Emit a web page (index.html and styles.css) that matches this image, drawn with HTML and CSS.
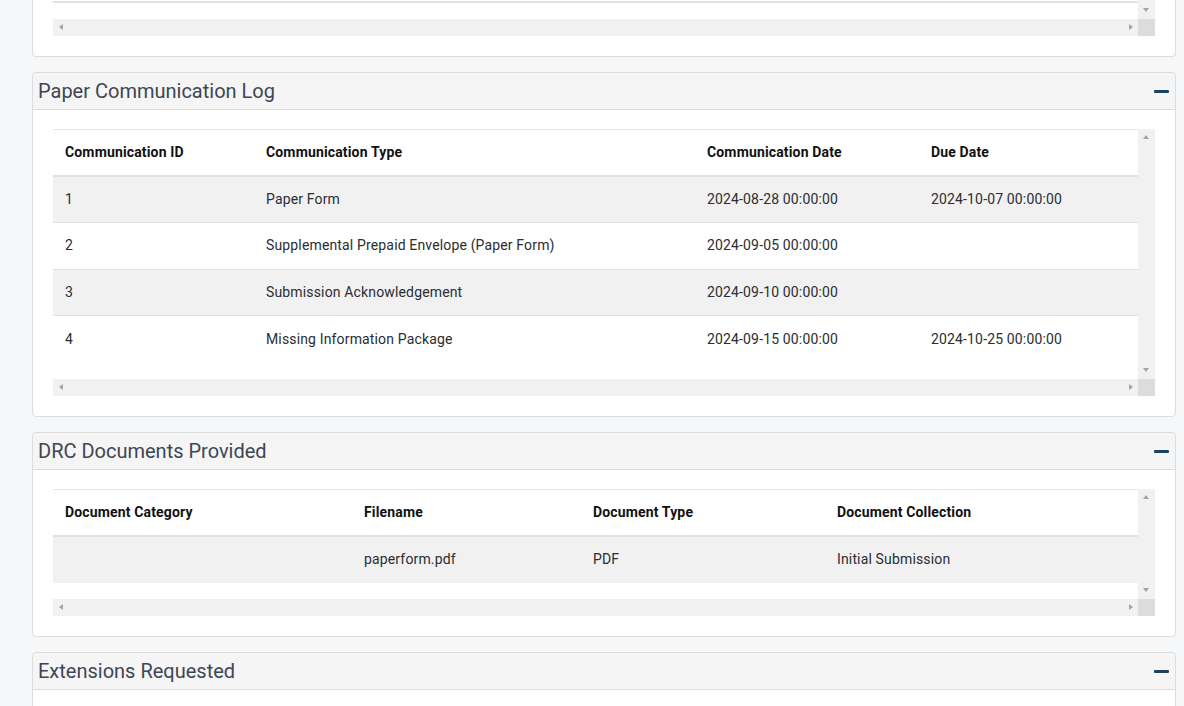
FILE: index.html
```html
<!DOCTYPE html>
<html lang="en">
<head>
<meta charset="utf-8">
<title>Case Detail</title>
<link rel="stylesheet" href="styles.css">
</head>
<body>
<main class="page">

  <section class="panel panel-cut">
    <div class="panel-body">
      <div class="scroller">
        <div class="viewport viewport-cut">
          <div class="cut-line"></div>
        </div>
        <div class="vbar"><span class="arr arr-down"></span></div>
        <div class="hbar"><span class="arr arr-left"></span><span class="arr arr-right"></span></div>
        <div class="corner"></div>
      </div>
    </div>
  </section>

  <section class="panel">
    <header class="panel-head">
      <h2 class="panel-title">Paper Communication Log</h2>
      <span class="collapse-btn"></span>
    </header>
    <div class="panel-body">
      <div class="scroller">
        <div class="viewport viewport-comm">
          <table class="grid">
            <colgroup>
              <col class="w201"><col class="w441"><col class="w224"><col>
            </colgroup>
            <thead>
              <tr><th>Communication ID</th><th>Communication Type</th><th>Communication Date</th><th>Due Date</th></tr>
            </thead>
            <tbody>
              <tr class="odd"><td>1</td><td>Paper Form</td><td>2024-08-28 00:00:00</td><td>2024-10-07 00:00:00</td></tr>
              <tr><td>2</td><td>Supplemental Prepaid Envelope (Paper Form)</td><td>2024-09-05 00:00:00</td><td></td></tr>
              <tr class="odd"><td>3</td><td>Submission Acknowledgement</td><td>2024-09-10 00:00:00</td><td></td></tr>
              <tr class="last"><td>4</td><td>Missing Information Package</td><td>2024-09-15 00:00:00</td><td>2024-10-25 00:00:00</td></tr>
            </tbody>
          </table>
        </div>
        <div class="vbar"><span class="arr arr-up"></span><span class="arr arr-down"></span></div>
        <div class="hbar"><span class="arr arr-left"></span><span class="arr arr-right"></span></div>
        <div class="corner"></div>
      </div>
    </div>
  </section>

  <section class="panel">
    <header class="panel-head">
      <h2 class="panel-title">DRC Documents Provided</h2>
      <span class="collapse-btn"></span>
    </header>
    <div class="panel-body">
      <div class="scroller">
        <div class="viewport viewport-drc">
          <table class="grid">
            <colgroup>
              <col class="w299"><col class="w229"><col class="w244"><col>
            </colgroup>
            <thead>
              <tr><th>Document Category</th><th>Filename</th><th>Document Type</th><th>Document Collection</th></tr>
            </thead>
            <tbody>
              <tr class="odd last"><td></td><td>paperform.pdf</td><td>PDF</td><td>Initial Submission</td></tr>
            </tbody>
          </table>
        </div>
        <div class="vbar"><span class="arr arr-up"></span><span class="arr arr-down"></span></div>
        <div class="hbar"><span class="arr arr-left"></span><span class="arr arr-right"></span></div>
        <div class="corner"></div>
      </div>
    </div>
  </section>

  <section class="panel">
    <header class="panel-head">
      <h2 class="panel-title">Extensions Requested</h2>
      <span class="collapse-btn"></span>
    </header>
    <div class="panel-body panel-body-tall"></div>
  </section>

</main>
</body>
</html>
```

FILE: styles.css
```css
* { box-sizing: border-box; }

html, body {
  margin: 0;
  padding: 0;
  background: #f6f7f9;
  font-family: Roboto, "Liberation Sans", Arial, sans-serif;
  font-size: 14px;
  color: #212529;
  overflow: hidden;
}

.page {
  padding: 0 8px 0 32px;
  display: flex;
  flex-direction: column;
  gap: 15px;
}

.panel {
  background: #fff;
  border: 1px solid #dddddd;
  border-radius: 4px;
}

.panel-cut {
  border-top: none;
  border-radius: 0 0 4px 4px;
}

.panel-head {
  display: flex;
  align-items: center;
  justify-content: space-between;
  background: #f5f5f5;
  border-bottom: 1px solid #dddddd;
  border-radius: 4px 4px 0 0;
  height: 37px;
  padding: 0 6px 0 5px;
}

.panel-title {
  margin: 0;
  font-weight: 400;
  font-size: 20px;
  line-height: 24px;
  color: #3d4654;
}

.collapse-btn {
  display: block;
  width: 15px;
  height: 3px;
  background: #1b4261;
  border-radius: 1px;
}

.panel-body {
  padding: 19px 20px 20px 20px;
}

.panel-cut .panel-body { padding: 0 20px 20px 20px; }

.panel-body-tall { height: 60px; }

/* scroll box with drawn scrollbars */
.scroller {
  display: grid;
  grid-template-columns: 1fr 17px;
  grid-template-rows: auto 17px;
}

.viewport {
  overflow: hidden;
  background: #fff;
}

.viewport-cut { height: 19px; }
.viewport-comm { height: 250px; }
.viewport-drc { height: 110px; }

.cut-line {
  margin-top: 1px;
  height: 2px;
  background: #dee2e6;
}

.vbar {
  position: relative;
  background: #f1f1f1;
}

.hbar {
  position: relative;
  background: #f1f1f1;
  height: 17px;
}

.corner { background: #dcdcdc; }

.arr {
  position: absolute;
  width: 0;
  height: 0;
  border-style: solid;
  border-color: transparent;
}

.arr-up {
  top: 6px;
  left: 5px;
  border-width: 0 3.5px 4px 3.5px;
  border-bottom-color: #a3a3a3;
}

.arr-down {
  bottom: 7px;
  left: 5px;
  border-width: 4px 3.5px 0 3.5px;
  border-top-color: #a3a3a3;
}

.arr-left {
  left: 6px;
  top: 5px;
  border-width: 3.5px 4px 3.5px 0;
  border-right-color: #a3a3a3;
}

.arr-right {
  right: 5px;
  top: 5px;
  border-width: 3.5px 0 3.5px 4px;
  border-left-color: #a3a3a3;
}

/* tables */
.grid {
  width: 100%;
  border-collapse: collapse;
  table-layout: fixed;
  border-top: 1px solid #e3e5e8;
}

.w201 { width: 201px; }
.w441 { width: 441px; }
.w224 { width: 224px; }
.w299 { width: 299px; }
.w229 { width: 229px; }
.w244 { width: 244px; }

.grid th,
.grid td {
  text-align: left;
  padding: 12px;
  line-height: 21px;
  white-space: nowrap;
  vertical-align: middle;
  letter-spacing: 0.15px;
}

.grid th {
  font-weight: 700;
  color: #111;
  height: 45px;
  border-bottom: 2px solid #dee2e6;
}

.grid td {
  height: 46.5px;
  color: #2a2d31;
  border-bottom: 1px solid #dee2e6;
}

.grid tr.odd td { background: #f1f1f1; }
.grid tr.last td { border-bottom: none; }
```
